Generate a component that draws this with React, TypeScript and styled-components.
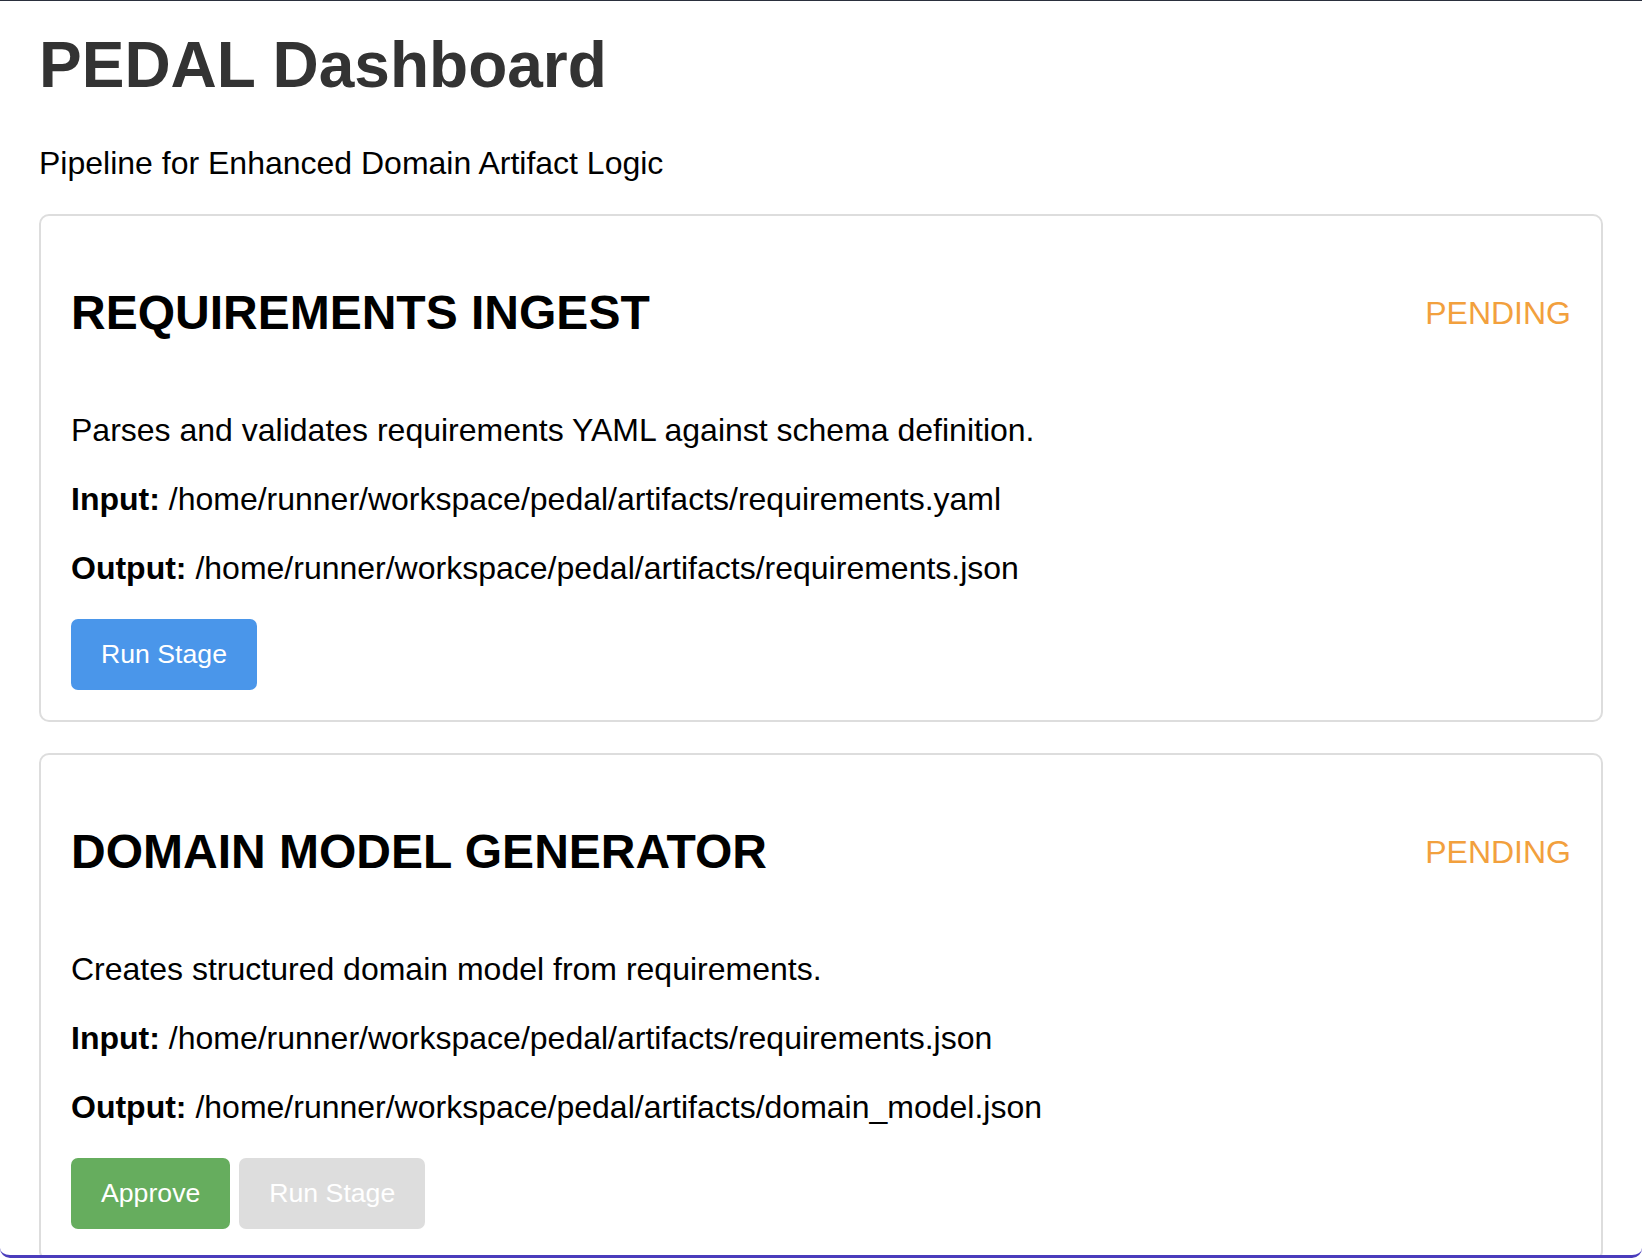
import React from "react";
import styled, { createGlobalStyle } from "styled-components";

const GlobalStyle = createGlobalStyle`
  html, body {
    margin: 0;
    padding: 0;
    background: #fff;
  }
  body {
    font-family: "Liberation Sans", Arial, Helvetica, sans-serif;
    font-size: 32px;
    color: #000;
  }
`;

const Frame = styled.div`
  box-sizing: border-box;
  height: 100vh;
  overflow: hidden;
  border-top: 1px solid #2a2f3d;
  border-bottom: 3px solid #4a3cbc;
  border-radius: 0 0 10px 10px;
`;

const Page = styled.main`
  padding: 0 39px;
`;

const Title = styled.h1`
  margin: 27px 0 43px;
  font-size: 64px;
  font-weight: 700;
  color: #333;
`;

const Subtitle = styled.p`
  margin: 0 0 32px;
  font-size: 32px;
`;

const Card = styled.section`
  border: 2px solid #ddd;
  border-radius: 10px;
  padding: 30px;
  margin-bottom: 31px;
`;

const CardHeader = styled.div`
  display: flex;
  align-items: center;
  justify-content: space-between;
`;

const StageName = styled.h2`
  margin: 39px 0 40px;
  font-size: 48px;
  font-weight: 700;
`;

const Status = styled.span<{ $tone: "pending" | "done" }>`
  font-size: 32px;
  color: ${(p) => (p.$tone === "pending" ? "#f2a03d" : "#66ad5e")};
`;

const Line = styled.p`
  margin: 32px 0;
  font-size: 32px;

  strong {
    font-weight: 700;
  }
`;

const Actions = styled.div`
  display: flex;
  gap: 9px;
`;

const ActionButton = styled.button<{ $variant: "run" | "approve" }>`
  font-family: "Liberation Sans", Arial, Helvetica, sans-serif;
  font-size: 26.67px;
  padding: 20px 30px;
  border: none;
  border-radius: 7px;
  color: #fff;
  cursor: pointer;
  background-color: ${(p) => (p.$variant === "approve" ? "#66ad5e" : "#4a96ea")};

  &:disabled {
    background-color: #ddd;
    color: #fff;
    cursor: default;
  }
`;

interface Stage {
  name: string;
  description: string;
  input: string;
  output: string;
  needsApproval: boolean;
}

const stages: Stage[] = [
  {
    name: "REQUIREMENTS INGEST",
    description: "Parses and validates requirements YAML against schema definition.",
    input: "/home/runner/workspace/pedal/artifacts/requirements.yaml",
    output: "/home/runner/workspace/pedal/artifacts/requirements.json",
    needsApproval: false,
  },
  {
    name: "DOMAIN MODEL GENERATOR",
    description: "Creates structured domain model from requirements.",
    input: "/home/runner/workspace/pedal/artifacts/requirements.json",
    output: "/home/runner/workspace/pedal/artifacts/domain_model.json",
    needsApproval: true,
  },
];

const StageCard: React.FC<{ stage: Stage }> = ({ stage }) => (
  <Card>
    <CardHeader>
      <StageName>{stage.name}</StageName>
      <Status $tone="pending">PENDING</Status>
    </CardHeader>
    <Line>{stage.description}</Line>
    <Line>
      <strong>Input:</strong> {stage.input}
    </Line>
    <Line>
      <strong>Output:</strong> {stage.output}
    </Line>
    <Actions>
      {stage.needsApproval && <ActionButton $variant="approve">Approve</ActionButton>}
      <ActionButton $variant="run" disabled={stage.needsApproval}>
        Run Stage
      </ActionButton>
    </Actions>
  </Card>
);

export default function App() {
  return (
    <Frame>
      <GlobalStyle />
      <Page>
        <Title>PEDAL Dashboard</Title>
        <Subtitle>Pipeline for Enhanced Domain Artifact Logic</Subtitle>
        {stages.map((s) => (
          <StageCard key={s.name} stage={s} />
        ))}
      </Page>
    </Frame>
  );
}
